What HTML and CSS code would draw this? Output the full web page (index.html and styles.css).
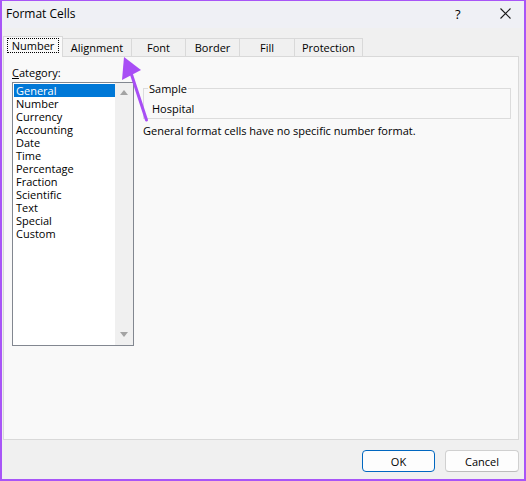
FILE: index.html
```html
<!DOCTYPE html>
<html>
<head>
<meta charset="utf-8">
<link rel="stylesheet" href="styles.css">
</head>
<body>
<div class="window">
  <div class="titlebar">
    <span class="title">Format Cells</span>
    <span class="help">?</span>
    <svg class="close" width="11" height="11" viewBox="0 0 11 11"><path d="M0.5 0.5L10.5 10.5M10.5 0.5L0.5 10.5" stroke="#1a1a1a" stroke-width="1.1" fill="none"/></svg>
  </div>
  <div class="content">
    <div class="tabs">
      <div class="tab selected t-number"><span class="focus">Number</span></div>
      <div class="tab t-align">Alignment</div>
      <div class="tab t-font">Font</div>
      <div class="tab t-border">Border</div>
      <div class="tab t-fill">Fill</div>
      <div class="tab t-prot">Protection</div>
    </div>
    <div class="panel">
      <div class="left">
        <div class="label"><u>C</u>ategory:</div>
        <div class="listbox">
          <ul class="items">
            <li class="active">General</li>
            <li>Number</li>
            <li>Currency</li>
            <li>Accounting</li>
            <li>Date</li>
            <li>Time</li>
            <li>Percentage</li>
            <li>Fraction</li>
            <li>Scientific</li>
            <li>Text</li>
            <li>Special</li>
            <li>Custom</li>
          </ul>
          <div class="scrollbar">
            <span class="arrow up"></span>
            <span class="arrow down"></span>
          </div>
        </div>
      </div>
      <div class="right">
        <fieldset class="sample">
          <legend>Sample</legend>
          <div class="sample-value">Hospital</div>
        </fieldset>
        <div class="desc">General format cells have no specific number format.</div>
      </div>
    </div>
    <div class="buttons">
      <button class="btn primary">OK</button>
      <button class="btn">Cancel</button>
    </div>
  </div>
  <svg class="pointer" width="526" height="481" viewBox="0 0 526 481">
    <polygon points="124,57 122,80 141,70" fill="#a84ef5"/>
    <line x1="131" y1="73" x2="146.5" y2="120" stroke="#a84ef5" stroke-width="3" stroke-linecap="round"/>
  </svg>
</div>
</body>
</html>
```
FILE: styles.css
```css
* { box-sizing: border-box; }
html, body { margin: 0; padding: 0; }
body {
  font-family: "Open Sans", "Noto Sans", sans-serif;
  font-size: 11px;
  color: #000;
  background: #fff;
}
.window {
  position: relative;
  width: 526px;
  height: 481px;
  border: 2px solid #a855f7;
  border-top-width: 1px;
  display: flex;
  flex-direction: column;
  background: #f0f0f0;
}
.titlebar {
  height: 27px;
  flex: none;
  background: #eff0f5;
  display: flex;
  align-items: center;
  padding-left: 4px;
}
.title {
  font-size: 12px;
  flex: 1;
  padding-bottom: 2px;
}
.help {
  font-size: 13px;
  width: 14px;
  margin-right: 31px;
  padding-bottom: 2px;
}
.close {
  margin-right: 13px;
  margin-bottom: 2px;
}
.content {
  flex: 1;
  display: flex;
  flex-direction: column;
  padding: 8px 5px 0 1px;
}
.tabs {
  display: flex;
  align-items: flex-end;
  height: 20px;
  position: relative;
  z-index: 1;
}
.tab {
  height: 18px;
  border: 1px solid #d9d9d9;
  border-bottom: none;
  border-left: none;
  background: #f0f0f0;
  display: flex;
  align-items: center;
  justify-content: center;
  line-height: 13px;
  padding-bottom: 1px;
}
.tab.selected {
  height: 21px;
  margin-bottom: -1px;
  border-left: 1px solid #d9d9d9;
  background: #f9f9f9;
  padding-bottom: 3px;
}
.focus {
  border: 1px dotted #000;
  padding: 0 4px;
  height: 15px;
  line-height: 13px;
}
.t-number { width: 60px; }
.t-align { width: 69px; }
.t-font { width: 54px; }
.t-border { width: 54px; }
.t-fill { width: 55px; }
.t-prot { width: 68px; }
.panel {
  height: 384px;
  flex: none;
  border: 1px solid #d9d9d9;
  background: #f9f9f9;
  display: flex;
  padding: 9px 7px 0 8px;
  gap: 9px;
}
.left {
  width: 122px;
  flex: none;
}
.label {
  height: 13px;
  line-height: 13px;
}
.listbox {
  margin-top: 3px;
  height: 264px;
  border: 1px solid #828790;
  background: #fff;
  display: flex;
}
.items {
  list-style: none;
  margin: 0;
  padding: 1px 0 0 1px;
  flex: 1;
}
.items li {
  height: 13px;
  line-height: 13px;
  padding-left: 2px;
}
.items li.active {
  background: #0078d7;
  color: #fff;
  height: 13px;
}
.scrollbar {
  width: 18px;
  background: #f0f0f0;
  display: flex;
  flex-direction: column;
  justify-content: space-between;
  align-items: center;
  padding: 7px 0 8px;
}
.arrow {
  width: 0;
  height: 0;
  border-left: 4px solid transparent;
  border-right: 4px solid transparent;
}
.arrow.up { border-bottom: 5px solid #a3a3a3; }
.arrow.down { border-top: 5px solid #a3a3a3; }
.right {
  flex: 1;
  padding-top: 16px;
}
.sample {
  margin: 0;
  border: 1px solid #dcdcdc;
  padding: 7px 8px 3px;
}
.sample legend {
  padding: 0 1px;
  margin-left: -4px;
  line-height: 13px;
}
.sample-value {
  line-height: 13px;
}
.desc {
  margin-top: 5px;
  line-height: 13px;
}
.buttons {
  display: flex;
  justify-content: flex-end;
  gap: 10px;
  margin-top: 10px;
  padding-right: 0;
}
.btn {
  width: 74px;
  height: 22px;
  font-family: inherit;
  font-size: 11px;
  color: #000;
  background: #fdfdfd;
  border: 1px solid #d0d0d0;
  border-bottom-color: #bcbcbc;
  border-radius: 4px;
  padding: 0;
}
.btn.primary {
  width: 73px;
  border: 1px solid #0067c0;
}
.pointer {
  position: absolute;
  left: -2px;
  top: -1px;
  pointer-events: none;
  z-index: 5;
}
```
